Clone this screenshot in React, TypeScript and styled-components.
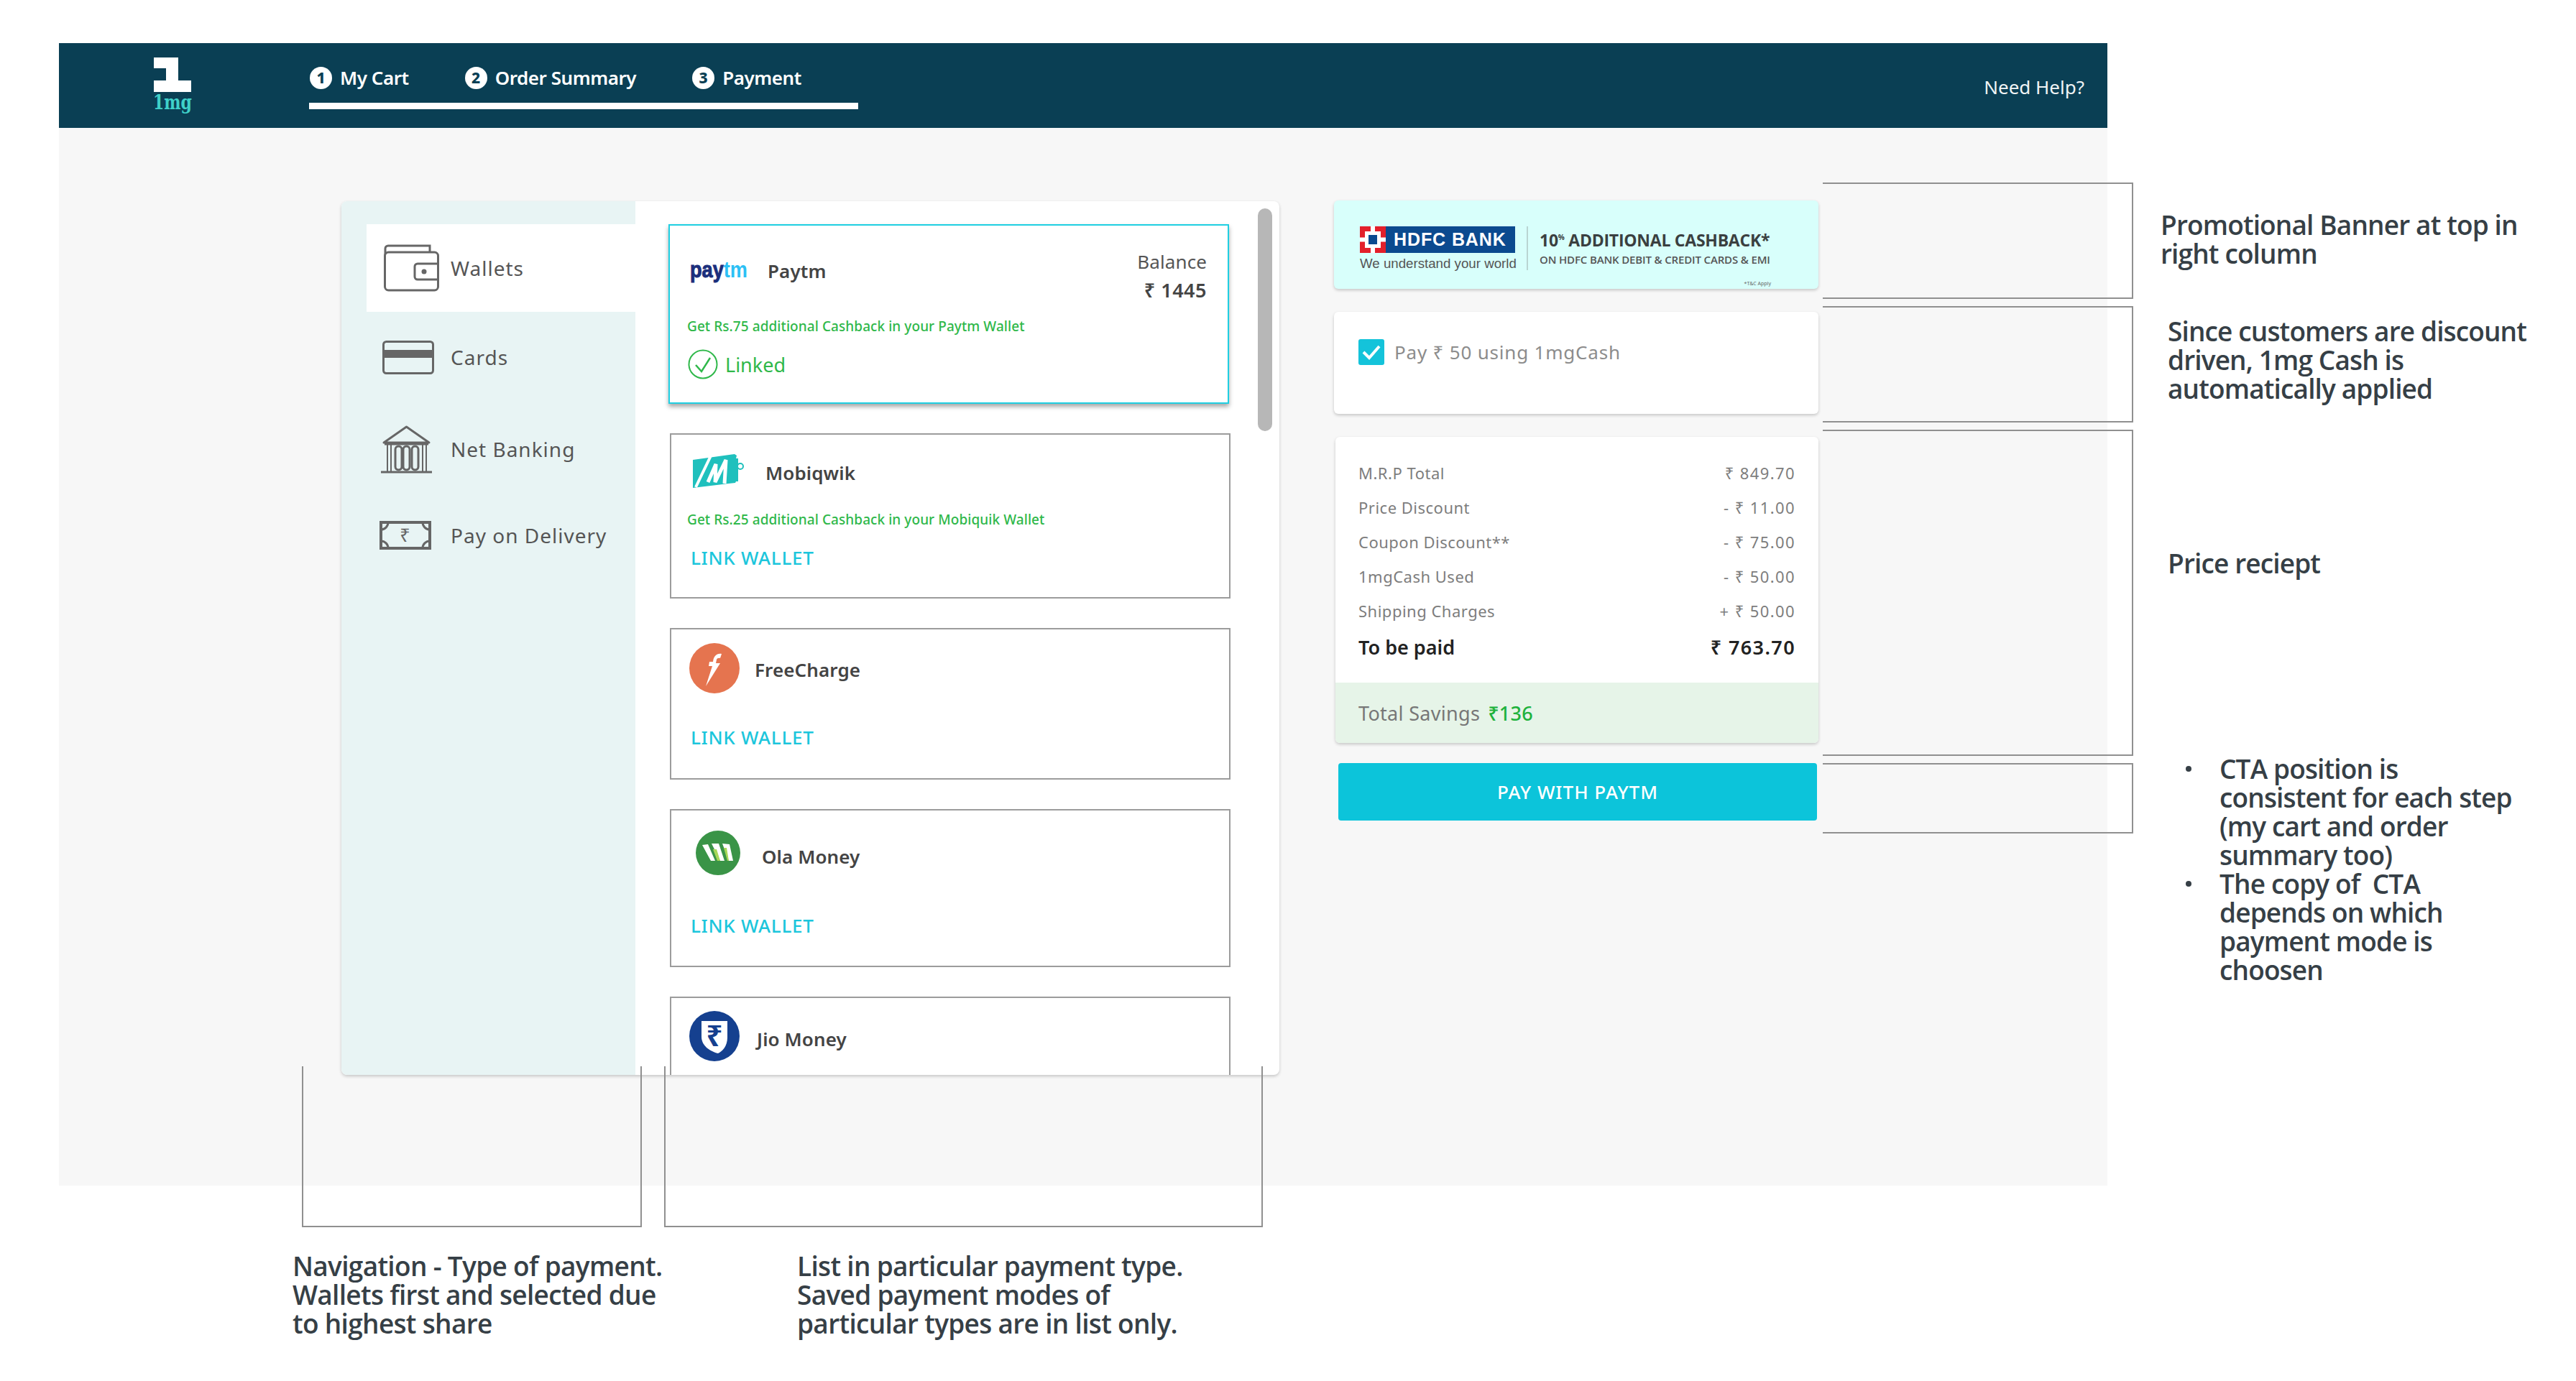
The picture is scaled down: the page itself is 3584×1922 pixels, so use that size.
import React from "react";
import styled, { createGlobalStyle } from "styled-components";

const Global = createGlobalStyle`
  html, body { margin: 0; padding: 0; background: #fff; width: 3584px; height: 1922px; overflow: hidden; }
  * { box-sizing: border-box; }
`;

const UI = `"Noto Sans", "DejaVu Sans", sans-serif`;
const NOTE = `"Open Sans", "Noto Sans", sans-serif`;

const Page = styled.div`
  position: relative;
  width: 3584px;
  height: 1922px;
  padding: 60px 0 0 82px;
  display: grid;
  grid-template-columns: 2850px 1fr;
  grid-template-rows: 1590px 1fr;
  font-family: ${UI};
`;
const Screen = styled.main`
  background: #f7f7f7;
  display: flex;
  flex-direction: column;
`;
const Header = styled.header`
  height: 118px;
  background: #0a3f54;
  display: flex;
  color: #fff;
`;
const Logo = styled.svg`
  width: 54px;
  height: 84px;
  margin: 20px 0 0 131px;
  flex: none;
  overflow: visible;
`;
const Steps = styled.div`
  width: 764px;
  margin-left: 163px;
  padding-top: 32px;
`;
const StepRow = styled.div`
  display: flex;
  gap: 78px;
  height: 32px;
  padding-left: 1px;
`;
const Step = styled.div`
  display: flex;
  align-items: center;
  gap: 11px;
  font-size: 26px;
  font-weight: 600;
  letter-spacing: -0.45px;
  white-space: nowrap;
`;
const StepNum = styled.span`
  width: 31px;
  height: 31px;
  border-radius: 50%;
  background: #fff;
  color: #0a3f54;
  font-size: 21px;
  font-weight: 800;
  letter-spacing: 0;
  display: flex;
  align-items: center;
  justify-content: center;
`;
const StepBar = styled.div`
  height: 9px;
  margin-top: 19px;
  background: #fff;
`;
const Help = styled.div`
  margin: 4px 32px 0 auto;
  align-self: center;
  font-size: 26px;
  color: #f0f4f5;
`;
const Content = styled.div`
  display: flex;
  padding: 101px 0 0 393px;
`;
const Panel = styled.section`
  width: 1305px;
  height: 1216px;
  margin-top: 1px;
  display: flex;
  background: #fff;
  border-radius: 8px;
  overflow: hidden;
  box-shadow: 0 2px 4px rgba(0, 0, 0, 0.2);
  flex: none;
`;
const Sidebar = styled.nav`
  width: 409px;
  padding: 32px 0 0 35px;
  background: #e8f4f4;
  display: grid;
  grid-template-rows: 122px 126px 130px 110px;
  align-content: start;
  flex: none;
`;
const NavItem = styled.div<{ $active?: boolean }>`
  display: flex;
  align-items: center;
  background: ${(p) => (p.$active ? "#fff" : "transparent")};
  font-size: 28px;
  letter-spacing: 1px;
  color: #555;
`;
const NavSlot = styled.span<{ $left: number }>`
  width: 117px;
  padding-left: ${(p) => p.$left}px;
  display: flex;
  flex: none;
`;
const ListArea = styled.div`
  width: 866px;
  height: 1216px;
  padding: 32px 0 0 48px;
  overflow: hidden;
  display: flex;
  flex-direction: column;
  gap: 41px;
  flex: none;
`;
const Track = styled.div`
  flex: 1;
  padding-top: 10px;
`;
const Thumb = styled.div`
  width: 20px;
  height: 310px;
  background: #b7b7b7;
  border-radius: 10px;
`;
const Card = styled.article<{ $h: number; $pad: number; $sel?: boolean }>`
  width: 780px;
  height: ${(p) => p.$h}px;
  flex: none;
  padding: ${(p) => p.$pad}px 0 0;
  border: 2px solid ${(p) => (p.$sel ? "#1fcfe2" : "#9c9c9c")};
  margin-left: ${(p) => (p.$sel ? -2 : 0)}px;
  box-shadow: ${(p) => (p.$sel ? "0 4px 6px rgba(0,0,0,.35)" : "none")};
  background: #fff;
`;
const CardHead = styled.div`
  height: 60px;
  display: flex;
  align-items: center;
`;
const Brand = styled.svg<{ $left: number; $w: number; $h: number; $up: number }>`
  width: ${(p) => p.$w}px;
  height: ${(p) => p.$h}px;
  margin-left: ${(p) => p.$left}px;
  margin-top: ${(p) => -p.$up * 2}px;
  flex: none;
  overflow: visible;
`;
const CardName = styled.span<{ $left: number }>`
  margin-left: ${(p) => p.$left}px;
  font-size: 26px;
  font-weight: 600;
  color: #444;
  letter-spacing: 0.1px;
  white-space: nowrap;
`;
const Balance = styled.div`
  margin: -2px 29px 0 auto;
  align-self: flex-start;
  text-align: right;
  font-size: 26px;
  line-height: 39px;
  color: #555;
  letter-spacing: 0.1px;
`;
const BalanceValue = styled.div`
  font-size: 27px;
  font-weight: 600;
  color: #444;
  letter-spacing: 0.5px;
`;
const Promo = styled.div<{ $left: number; $gap: number }>`
  margin: ${(p) => p.$gap}px 0 0 ${(p) => p.$left}px;
  font-size: 19px;
  line-height: 30px;
  font-weight: 500;
  color: #2fb84a;
  letter-spacing: 0.07px;
  white-space: nowrap;
`;
const Linked = styled.div`
  margin: 16px 0 0 25px;
  height: 44px;
  display: flex;
  align-items: center;
  gap: 10px;
  font-size: 27px;
  color: #2fb84a;
`;
const LinkWallet = styled.div<{ $gap: number }>`
  margin: ${(p) => p.$gap}px 0 0 27px;
  font-size: 26px;
  line-height: 40px;
  font-weight: 500;
  color: #1cc6dc;
  letter-spacing: 0.7px;
`;
const Side = styled.aside`
  width: 674px;
  margin-left: 76px;
  display: flex;
  flex-direction: column;
  flex: none;
`;
const Banner = styled.section`
  height: 123px;
  padding: 36px 0 0 36px;
  display: flex;
  align-items: flex-start;
  background: #d8fffb;
  border-radius: 6px;
  box-shadow: 0 2px 4px rgba(0, 0, 0, 0.2);
`;
const BankCol = styled.div`
  width: 216px;
  flex: none;
`;
const BankLogo = styled.div`
  display: flex;
  height: 37px;
`;
const BankName = styled.div`
  flex: 1;
  padding-left: 11px;
  background: #0b4a8f;
  color: #fff;
  font-family: "Liberation Sans", sans-serif;
  font-weight: 700;
  font-size: 25px;
  line-height: 37px;
  letter-spacing: 0.9px;
  white-space: nowrap;
`;
const Tagline = styled.div`
  margin-top: 2px;
  font-family: "Liberation Sans", sans-serif;
  font-size: 18.700px;
  line-height: 26px;
  color: #555;
  white-space: nowrap;
`;
const BannerRule = styled.div`
  width: 2px;
  height: 61px;
  margin-left: 16px;
  background: #b9d5d2;
  flex: none;
`;
const OfferCol = styled.div`
  width: 322px;
  margin: 4px 0 0 16px;
`;
const OfferTitle = styled.div`
  font-family: "Open Sans", sans-serif;
  font-weight: 700;
  font-size: 23px;
  line-height: 30px;
  letter-spacing: -0.25px;
  color: #3a3f40;
  white-space: nowrap;
`;
const OfferSup = styled.sup`
  font-size: 10px;
  line-height: 0;
`;
const OfferSub = styled.div`
  font-family: "Open Sans", sans-serif;
  font-weight: 600;
  font-size: 15px;
  line-height: 24px;
  letter-spacing: -0.15px;
  color: #555;
  white-space: nowrap;
`;
const OfferTerms = styled.div`
  margin-top: 16px;
  text-align: right;
  font-size: 7px;
  line-height: 12px;
  color: #666;
`;
const CashCard = styled.section`
  height: 142px;
  margin-top: 32px;
  padding: 38px 0 0 34px;
  display: flex;
  align-items: flex-start;
  gap: 14px;
  background: #fff;
  border-radius: 6px;
  box-shadow: 0 2px 4px rgba(0, 0, 0, 0.2);
`;
const Check = styled.span`
  width: 36px;
  height: 36px;
  border-radius: 3px;
  background: #14c3da;
  display: flex;
  align-items: center;
  justify-content: center;
`;
const CashText = styled.span`
  font-size: 26px;
  line-height: 36px;
  color: #8c8c8c;
  letter-spacing: 0.8px;
`;
const Receipt = styled.section`
  height: 426px;
  width: 672px;
  margin: 32px 0 0 2px;
  padding-top: 26px;
  display: flex;
  flex-direction: column;
  background: #fff;
  border-radius: 6px;
  overflow: hidden;
  box-shadow: 0 2px 4px rgba(0, 0, 0, 0.2);
`;
const Row = styled.div<{ $strong?: boolean }>`
  flex: none;
  height: 48px;
  margin-top: ${(p) => (p.$strong ? 2 : 0)}px;
  padding: 0 32px;
  display: flex;
  align-items: center;
  justify-content: space-between;
  font-size: ${(p) => (p.$strong ? 27 : 22)}px;
  font-weight: ${(p) => (p.$strong ? 600 : 400)};
  color: ${(p) => (p.$strong ? "#222" : "#7d7d7d")};
  letter-spacing: ${(p) => (p.$strong ? "0" : "0.5px")};
`;
const RowValue = styled.span`
  letter-spacing: 1.4px;
`;
const Savings = styled.div`
  margin-top: 26px;
  height: 84px;
  padding-left: 32px;
  display: flex;
  align-items: center;
  gap: 11px;
  background: #e6f4e8;
  font-size: 27px;
  letter-spacing: 0.3px;
  color: #777;
`;
const SavingsValue = styled.span`
  color: #20b23c;
  font-weight: 500;
`;
const PayButton = styled.button`
  width: 666px;
  height: 80px;
  margin: 28px 0 0 6px;
  border: 0;
  border-radius: 4px;
  background: #0cc4da;
  color: #fff;
  font-family: ${UI};
  font-size: 26px;
  font-weight: 500;
  letter-spacing: 1px;
`;
const RightNotes = styled.div`
  padding: 233px 0 0 74px;
  display: flex;
  flex-direction: column;
`;
const Note = styled.div<{ $gap?: number; $indent?: number }>`
  margin-top: ${(p) => p.$gap ?? 0}px;
  margin-left: ${(p) => p.$indent ?? 0}px;
  font-family: ${NOTE};
  font-weight: 600;
  font-size: 37px;
  line-height: 40px;
  letter-spacing: -0.86px;
  color: #363f46;
  white-space: pre;
`;
const NoteList = styled.ul`
  margin: 246px 0 0;
  padding: 0 0 0 82px;
  list-style: none;
  font-family: ${NOTE};
  font-weight: 600;
  font-size: 37px;
  line-height: 40px;
  letter-spacing: -0.86px;
  color: #363f46;
`;
const NoteBullet = styled.li`
  position: relative;
  white-space: pre;
  &::before {
    content: "";
    position: absolute;
    left: -47px;
    top: 16px;
    width: 8px;
    height: 8px;
    border-radius: 50%;
    background: #363f46;
  }
`;
const BottomNotes = styled.div`
  grid-column: 1 / -1;
  padding: 92px 0 0 325px;
  display: flex;
  gap: 102px;
`;
const BottomNote = styled.div`
  width: 600px;
  font-family: ${NOTE};
  font-weight: 600;
  font-size: 37px;
  line-height: 40px;
  letter-spacing: -0.68px;
  color: #363f46;
  white-space: pre;
`;
const Bracket = styled.div<{ $x: number; $y: number; $w: number; $h: number; $side: "right" | "bottom" }>`
  position: absolute;
  left: ${(p) => p.$x}px;
  top: ${(p) => p.$y}px;
  width: ${(p) => p.$w}px;
  height: ${(p) => p.$h}px;
  border: 2px solid #909090;
  ${(p) => (p.$side === "right" ? "border-left: 0;" : "border-top: 0;")}
`;

const S = "#666";
const WalletIcon = () => (
  <svg width="77" height="66" viewBox="0 0 77 66" fill="none" stroke={S} strokeWidth="3">
    <path d="M2 14V6a4 4 0 0 1 4-4h58v9" />
    <rect x="1.500" y="11" width="74" height="53" rx="5" />
    <path d="M75 27H47a4 4 0 0 0-4 4v14a4 4 0 0 0 4 4h28" />
    <circle cx="56" cy="38" r="3.500" fill={S} stroke="none" />
  </svg>
);
const CardIcon = () => (
  <svg width="72" height="47" viewBox="0 0 72 47" fill="none" stroke={S} strokeWidth="3">
    <rect x="1.500" y="1.500" width="69" height="44" rx="4" />
    <rect x="1" y="13" width="70" height="11" fill={S} stroke="none" />
  </svg>
);
const BankIcon = () => (
  <svg width="71" height="67" viewBox="0 0 71 67" fill="none" stroke={S} strokeWidth="3">
    <path d="M35.500 2L67 24H4z" strokeLinejoin="round" />
    <path d="M0 65h71M5 26h61" />
    <path d="M9 27v37M63 27v37M14 27v37M58 27v37" strokeWidth="2" />
    <rect x="20" y="29" width="9" height="33" rx="4.500" />
    <rect x="31" y="29" width="9" height="33" rx="4.500" />
    <rect x="43" y="29" width="9" height="33" rx="4.500" />
  </svg>
);
const CashIcon = () => (
  <svg width="72" height="40" viewBox="0 0 72 40" fill="none" stroke={S} strokeWidth="4">
    <rect x="2" y="2" width="68" height="36" />
    <path d="M2 12a10 10 0 0 0 10-10M60 2a10 10 0 0 0 10 10M70 28a10 10 0 0 0-10 10M12 38A10 10 0 0 0 2 28" strokeWidth="3" />
    <text x="36" y="29" textAnchor="middle" fontFamily="Noto Sans, DejaVu Sans, sans-serif" fontSize="26" fill={S} stroke="none">₹</text>
  </svg>
);
const LinkedIcon = () => (
  <svg width="42" height="44" viewBox="0 0 42 44" fill="none" stroke="#2fb84a">
    <circle cx="21" cy="22" r="19.500" strokeWidth="2" />
    <path d="M11 23l8 9 12-19" strokeWidth="2.500" />
  </svg>
);

const brandFont = "Liberation Sans, sans-serif";
const logos: Record<string, React.ReactNode> = {
  paytm: (
    <text x="0" y="21" fontFamily={brandFont} fontWeight="700" fontSize="32" textLength="80" lengthAdjust="spacingAndGlyphs">
      <tspan fill="#1b2f7c" stroke="#1b2f7c" strokeWidth="1">pay</tspan>
      <tspan fill="#2cc0f5">tm</tspan>
    </text>
  ),
  mobi: (
    <>
      <path d="M1 12L59 4l3 2-1 4h3v32h-3l-1 2L1 51z" fill="#1fc0bd" />
      <path d="M5 50L29 0" stroke="#fff" strokeWidth="4" fill="none" />
      <path d="M22 43L33 18 32 43 47 12 45 45" stroke="#fff" strokeWidth="5" fill="none" />
      <circle cx="67" cy="21" r="4" fill="none" stroke="#1fc0bd" strokeWidth="2" />
    </>
  ),
  free: (
    <>
      <circle cx="35" cy="35" r="35" fill="#e5744f" />
      <path d="M45 15C38 14 34 18 33 26H28L27 32H32L23 60L43 28H37L38 23C38.500 21 41 20.500 43 21Z" fill="#fff" />
    </>
  ),
  ola: (
    <>
      <circle cx="31" cy="31" r="31" fill="#3a9447" />
      <path d="M9 20l8-1 10 23h-6zM22 18h10l8 24h-6zM37 18l10 1 5 23h-6z" fill="#fff" />
      <path d="M24 26l6 16h4l-5-16zM39 24l5 18h2l-3-18z" fill="#a8d858" />
    </>
  ),
  jio: (
    <>
      <circle cx="35" cy="35" r="35" fill="#15408f" />
      <path d="M17 14H53V37C53 49 46 56 40 59C28 56 17 48 17 36Z" fill="#fff" />
      <text x="35" y="49" textAnchor="middle" fontFamily="Noto Sans, DejaVu Sans, sans-serif" fontWeight="700" fontSize="40" fill="#15408f">₹</text>
    </>
  ),
};

export default function App() {
  return (
    <Page>
      <Global />
      <Screen>
        <Header>
          <Logo viewBox="0 0 54 84">
            <path d="M1 0H35V32H53V48H1V32H18V15H1Z" fill="#fff" />
            <text x="0" y="72" fontFamily="DejaVu Serif, serif" fontWeight="700" fontSize="27" fill="#3fd0c9" textLength="54" lengthAdjust="spacingAndGlyphs">1mg</text>
          </Logo>
          <Steps>
            <StepRow>
              <Step><StepNum>1</StepNum>My Cart</Step>
              <Step><StepNum>2</StepNum>Order Summary</Step>
              <Step><StepNum>3</StepNum>Payment</Step>
            </StepRow>
            <StepBar />
          </Steps>
          <Help>Need Help?</Help>
        </Header>
        <Content>
          <Panel>
            <Sidebar>
              <NavItem $active><NavSlot $left={24}><WalletIcon /></NavSlot>Wallets</NavItem>
              <NavItem><NavSlot $left={22}><CardIcon /></NavSlot>Cards</NavItem>
              <NavItem><NavSlot $left={20}><BankIcon /></NavSlot>Net Banking</NavItem>
              <NavItem><NavSlot $left={18}><CashIcon /></NavSlot>Pay on Delivery</NavItem>
            </Sidebar>
            <ListArea>
              <Card $h={250} $pad={33} $sel>
                <CardHead>
                  <Brand $left={28} $w={81} $h={22} $up={1} viewBox="0 0 81 22">{logos.paytm}</Brand>
                  <CardName $left={27}>Paytm</CardName>
                  <Balance>Balance<BalanceValue>₹ 1445</BalanceValue></Balance>
                </CardHead>
                <Promo $left={24} $gap={32}>Get Rs.75 additional Cashback in your Paytm Wallet</Promo>
                <Linked><LinkedIcon />Linked</Linked>
              </Card>
              <Card $h={230} $pad={23}>
                <CardHead>
                  <Brand $left={29} $w={74} $h={55} $up={3} viewBox="0 0 74 55">{logos.mobi}</Brand>
                  <CardName $left={28}>Mobiqwik</CardName>
                </CardHead>
                <Promo $left={22} $gap={20}>Get Rs.25 additional Cashback in your Mobiquik Wallet</Promo>
                <LinkWallet $gap={18}>LINK WALLET</LinkWallet>
              </Card>
              <Card $h={211} $pad={26}>
                <CardHead>
                  <Brand $left={25} $w={70} $h={70} $up={2} viewBox="0 0 70 70">{logos.free}</Brand>
                  <CardName $left={21}>FreeCharge</CardName>
                </CardHead>
                <LinkWallet $gap={44}>LINK WALLET</LinkWallet>
              </Card>
              <Card $h={220} $pad={34}>
                <CardHead>
                  <Brand $left={34} $w={62} $h={62} $up={5} viewBox="0 0 62 62">{logos.ola}</Brand>
                  <CardName $left={30}>Ola Money</CardName>
                </CardHead>
                <LinkWallet $gap={46}>LINK WALLET</LinkWallet>
              </Card>
              <Card $h={200} $pad={27}>
                <CardHead>
                  <Brand $left={25} $w={70} $h={70} $up={4} viewBox="0 0 70 70">{logos.jio}</Brand>
                  <CardName $left={24}>Jio Money</CardName>
                </CardHead>
              </Card>
            </ListArea>
            <Track><Thumb /></Track>
          </Panel>
          <Side>
            <Banner>
              <BankCol>
                <BankLogo>
                  <svg width="36" height="37" viewBox="0 0 36 37">
                    <rect width="36" height="37" fill="#e3202b" />
                    <rect x="15" width="6" height="37" fill="#fff" />
                    <rect y="15.500" width="36" height="6" fill="#fff" />
                    <rect x="7" y="7" width="22" height="23" fill="#fff" />
                    <rect x="12" y="12" width="12" height="13" fill="#0b4a8f" />
                  </svg>
                  <BankName>HDFC BANK</BankName>
                </BankLogo>
                <Tagline>We understand your world</Tagline>
              </BankCol>
              <BannerRule />
              <OfferCol>
                <OfferTitle>10<OfferSup>%</OfferSup> ADDITIONAL CASHBACK*</OfferTitle>
                <OfferSub>ON HDFC BANK DEBIT &amp; CREDIT CARDS &amp; EMI</OfferSub>
                <OfferTerms>*T&amp;C Apply</OfferTerms>
              </OfferCol>
            </Banner>
            <CashCard>
              <Check>
                <svg width="26" height="22" viewBox="0 0 26 22" fill="none" stroke="#fff" strokeWidth="4">
                  <path d="M2 11l8 8L24 3" />
                </svg>
              </Check>
              <CashText>Pay ₹ 50 using 1mgCash</CashText>
            </CashCard>
            <Receipt>
              <Row><span>M.R.P Total</span><RowValue>₹ 849.70</RowValue></Row>
              <Row><span>Price Discount</span><RowValue>- ₹ 11.00</RowValue></Row>
              <Row><span>Coupon Discount**</span><RowValue>- ₹ 75.00</RowValue></Row>
              <Row><span>1mgCash Used</span><RowValue>- ₹ 50.00</RowValue></Row>
              <Row><span>Shipping Charges</span><RowValue>+ ₹ 50.00</RowValue></Row>
              <Row $strong><span>To be paid</span><RowValue>₹ 763.70</RowValue></Row>
              <Savings>Total Savings <SavingsValue>₹136</SavingsValue></Savings>
            </Receipt>
            <PayButton>PAY WITH PAYTM</PayButton>
          </Side>
        </Content>
      </Screen>
      <RightNotes>
        <Note>{"Promotional Banner at top in\nright column"}</Note>
        <Note $gap={68} $indent={10}>{"Since customers are discount\ndriven, 1mg Cash is\nautomatically applied"}</Note>
        <Note $gap={203} $indent={10}>Price reciept</Note>
        <NoteList>
          <NoteBullet>{"CTA position is\nconsistent for each step\n(my cart and order\nsummary too)"}</NoteBullet>
          <NoteBullet>{"The copy of  CTA\ndepends on which\npayment mode is\nchoosen"}</NoteBullet>
        </NoteList>
      </RightNotes>
      <BottomNotes>
        <BottomNote>{"Navigation - Type of payment.\nWallets first and selected due\nto highest share"}</BottomNote>
        <BottomNote>{"List in particular payment type.\nSaved payment modes of\nparticular types are in list only."}</BottomNote>
      </BottomNotes>
      <Bracket $side="right" $x={2536} $y={254} $w={432} $h={162} />
      <Bracket $side="right" $x={2536} $y={426} $w={432} $h={162} />
      <Bracket $side="right" $x={2536} $y={598} $w={432} $h={454} />
      <Bracket $side="right" $x={2536} $y={1062} $w={432} $h={98} />
      <Bracket $side="bottom" $x={420} $y={1484} $w={473} $h={224} />
      <Bracket $side="bottom" $x={924} $y={1484} $w={833} $h={224} />
    </Page>
  );
}
